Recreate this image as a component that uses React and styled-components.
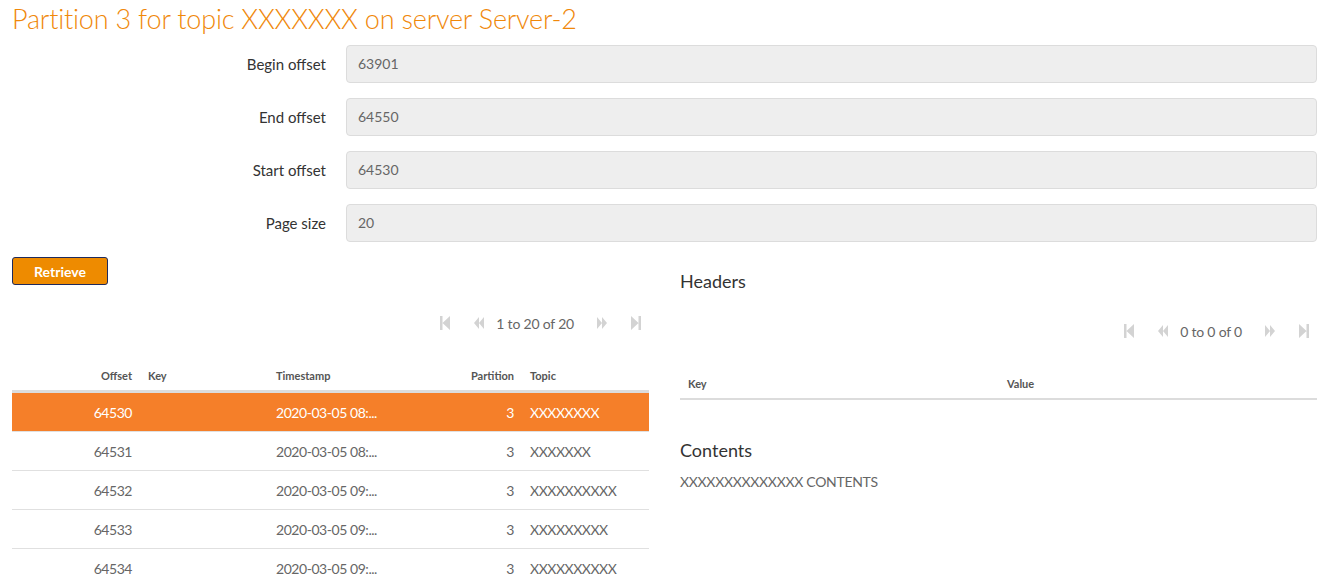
import React from "react";
import styled, { createGlobalStyle } from "styled-components";

const Global = createGlobalStyle`
  html, body { margin: 0; padding: 0; background: #fff; }
  body { font-family: Lato, "Open Sans", sans-serif; color: #333; }
  * { box-sizing: border-box; }
`;

const Page = styled.div`
  padding: 0 10px 0 12px;
`;

const Title = styled.h1`
  margin: 0;
  padding-top: 4px;
  height: 36px;
  font-family: Lato, sans-serif;
  font-weight: 300;
  font-size: 27px;
  line-height: 30px;
  color: #f0880a;
  letter-spacing: -0.2px;
`;

const Form = styled.div`
  display: grid;
  grid-template-columns: 314px 1fr;
  column-gap: 20px;
  row-gap: 15px;
  margin-top: 9px;
`;

const Label = styled.label`
  text-align: right;
  font-size: 15px;
  line-height: 38px;
  color: #333;
`;

const Input = styled.div`
  height: 38px;
  border: 1px solid #dcdcdc;
  border-radius: 4px;
  background: #eeeeee;
  padding: 0 11px;
  font-size: 14px;
  line-height: 36px;
  color: #666;
`;

const Columns = styled.div`
  display: grid;
  grid-template-columns: 637px 637px;
  column-gap: 31px;
  margin-top: 15px;
`;

const Panel = styled.div`
  display: flex;
  flex-direction: column;
`;

const Button = styled.button`
  align-self: flex-start;
  width: 96px;
  height: 28px;
  background: #ee8b00;
  border: 1px solid #1f2a5c;
  border-radius: 3px;
  color: #fff;
  font-family: Lato, sans-serif;
  font-weight: 700;
  font-size: 14px;
  padding: 0;
`;

const Pager = styled.div`
  display: flex;
  align-items: center;
  justify-content: flex-end;
  height: 20px;
  margin-top: ${(p) => p.$top}px;
  margin-right: -4px;
  color: #666;
  font-size: 14px;
  letter-spacing: -0.2px;
`;

const PagerIcon = styled.span`
  display: inline-flex;
  width: 12px;
  justify-content: center;
  margin: 0 11px;
  color: #d3d3d3;
`;

const PagerText = styled.span`
  margin: 0 11px 0 0;
`;

const Icon = ({ kind }) => {
  const paths = {
    first: "M1 1h2.5v14H1z M3.5 8l7.5-7v14z",
    prev: "M1 8l5-6v12z M6 8l5-6v12z",
    next: "M11 8L6 2v12z M6 8L1 2v12z",
    last: "M8.5 1H11v14H8.5z M8.5 8L1 1v14z",
  };
  return (
    <svg width="12" height="16" viewBox="0 0 12 16">
      <path d={paths[kind]} fill="currentColor" />
    </svg>
  );
};

const PagerBar = ({ text, top }) => (
  <Pager $top={top}>
    <PagerIcon><Icon kind="first" /></PagerIcon>
    <PagerIcon><Icon kind="prev" /></PagerIcon>
    <PagerText>{text}</PagerText>
    <PagerIcon><Icon kind="next" /></PagerIcon>
    <PagerIcon><Icon kind="last" /></PagerIcon>
  </Pager>
);

const Table = styled.div`
  margin-top: ${(p) => p.$top}px;
`;

const HeadRow = styled.div`
  display: grid;
  grid-template-columns: ${(p) => p.$cols};
  height: ${(p) => p.$h}px;
  align-items: center;
  border-bottom: ${(p) => p.$bw}px solid #dcdcdc;
  font-size: 11px;
  font-weight: 700;
  color: #555;
`;

const Row = styled.div`
  display: grid;
  grid-template-columns: ${(p) => p.$cols};
  height: 39px;
  align-items: center;
  border-bottom: 1px solid #e0e0e0;
  background: ${(p) => (p.$active ? "#f57f29" : "#fff")};
  color: ${(p) => (p.$active ? "#fff" : "#666")};
  font-size: 14px;
  letter-spacing: -0.45px;
`;

const Cell = styled.div`
  padding: 0 8px;
  text-align: ${(p) => (p.$right ? "right" : "left")};
  white-space: nowrap;
  overflow: hidden;
`;

const SectionTitle = styled.h2`
  margin: ${(p) => p.$top}px 0 0;
  font-size: 18px;
  font-weight: 400;
  line-height: 22px;
  color: #333;
`;

const Text = styled.div`
  margin-top: 12px;
  font-size: 14px;
  color: #666;
  letter-spacing: -0.3px;
`;

const cols = "128px 128px 170px 84px 127px";

const rows = [
  ["64530", "2020-03-05 08:...", "3", "XXXXXXXX"],
  ["64531", "2020-03-05 08:...", "3", "XXXXXXX"],
  ["64532", "2020-03-05 09:...", "3", "XXXXXXXXXX"],
  ["64533", "2020-03-05 09:...", "3", "XXXXXXXXX"],
  ["64534", "2020-03-05 09:...", "3", "XXXXXXXXXX"],
];

export default function App() {
  return (
    <Page>
      <Global />
      <Title>Partition 3 for topic XXXXXXX on server Server-2</Title>
      <Form>
        <Label>Begin offset</Label>
        <Input>63901</Input>
        <Label>End offset</Label>
        <Input>64550</Input>
        <Label>Start offset</Label>
        <Input>64530</Input>
        <Label>Page size</Label>
        <Input>20</Input>
      </Form>
      <Columns>
        <Panel>
          <Button>Retrieve</Button>
          <PagerBar text="1 to 20 of 20" top={28} />
          <Table $top={28}>
            <HeadRow $cols={cols} $h={32} $bw={3}>
              <Cell $right>Offset</Cell>
              <Cell>Key</Cell>
              <Cell>Timestamp</Cell>
              <Cell $right>Partition</Cell>
              <Cell>Topic</Cell>
            </HeadRow>
            {rows.map((r, i) => (
              <Row key={r[0]} $cols={cols} $active={i === 0}>
                <Cell $right>{r[0]}</Cell>
                <Cell></Cell>
                <Cell>{r[1]}</Cell>
                <Cell $right>{r[2]}</Cell>
                <Cell>{r[3]}</Cell>
              </Row>
            ))}
          </Table>
        </Panel>
        <Panel>
          <SectionTitle $top={13}>Headers</SectionTitle>
          <PagerBar text="0 to 0 of 0" top={29} />
          <Table $top={27}>
            <HeadRow $cols="319px 1fr" $h={32} $bw={2}>
              <Cell>Key</Cell>
              <Cell>Value</Cell>
            </HeadRow>
          </Table>
          <SectionTitle $top={39}>Contents</SectionTitle>
          <Text>XXXXXXXXXXXXXX CONTENTS</Text>
        </Panel>
      </Columns>
    </Page>
  );
}
